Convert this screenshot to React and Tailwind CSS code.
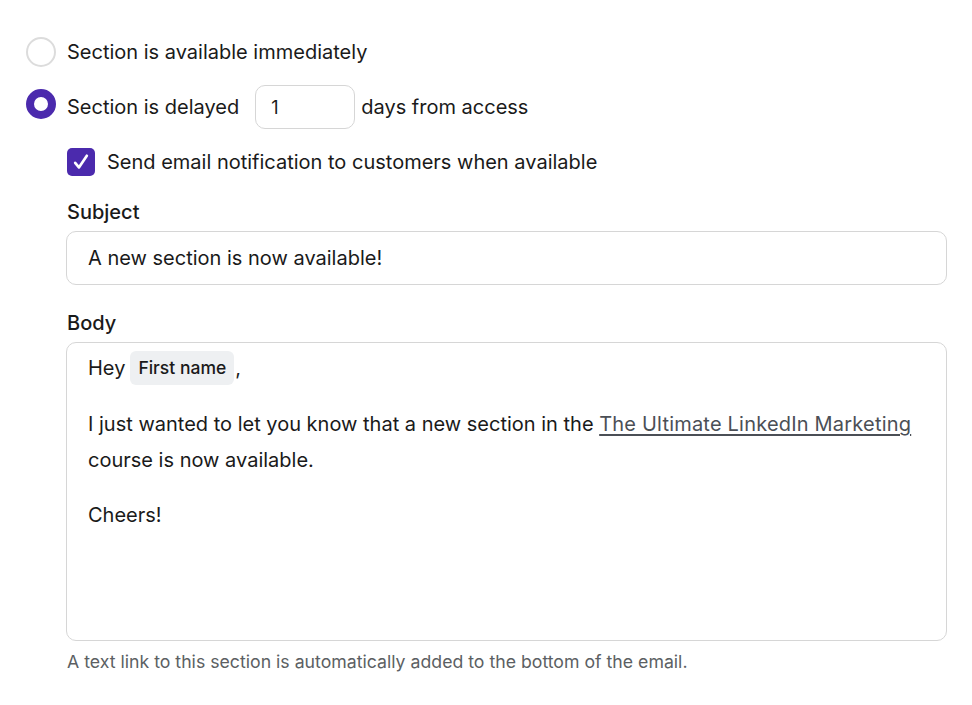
import React from 'react';

function Radio({ checked }) {
  return checked ? (
    <span className="h-[30px] w-[30px] rounded-full border-[8px] border-[#4b2aad] bg-white shrink-0" />
  ) : (
    <span className="h-[30px] w-[30px] rounded-full border-2 border-[#dcdcdc] bg-white shrink-0" />
  );
}

export default function App() {
  return (
    <div className="min-h-screen bg-white text-[#1a1a1a] pl-[26px] pr-[25px] pt-[37px]" style={{ fontFamily: 'Inter, "Noto Sans", sans-serif' }}>
      <div className="flex items-center gap-[11px] h-[30px]">
        <Radio />
        <span className="text-[20px]">Section is available immediately</span>
      </div>

      <div className="flex items-center mt-[18px] h-[44px]">
        <span className="-mt-[6px] flex">
          <Radio checked />
        </span>
        <span className="text-[20px] ml-[11px]">Section is delayed</span>
        <div className="ml-[16px] w-[100px] h-[44px] rounded-[10px] border border-[#d6d6d6] flex items-center px-[15px] text-[18px]">1</div>
        <span className="text-[20px] ml-[6px]">days from access</span>
      </div>

      <div className="pl-[40px]">
        <div className="flex items-center gap-[12px] mt-[19px] h-[28px] pl-[1px]">
          <span className="h-[28px] w-[28px] rounded-[5px] bg-[#4b2aad] flex items-center justify-center">
            <svg width="20" height="20" viewBox="0 0 24 24" fill="none" stroke="white" strokeWidth="3.2" strokeLinecap="round" strokeLinejoin="round">
              <path d="M5 13l4.5 5.5L19 4.5" />
            </svg>
          </span>
          <span className="text-[20px]">Send email notification to customers when available</span>
        </div>

        <div className="mt-[24px] pl-[1px] text-[20px] font-medium leading-[24px]">Subject</div>
        <div className="mt-[7px] h-[54px] rounded-[10px] border border-[#d6d6d6] flex items-center px-[21px] text-[20px]">
          A new section is now available!
        </div>

        <div className="mt-[26px] pl-[1px] text-[20px] font-medium leading-[24px]">Body</div>
        <div className="mt-[7px] h-[299px] rounded-[10px] border border-[#d6d6d6] pl-[21px] pr-[30px] pt-[7px] text-[20px] leading-[36px]">
          <div className="flex items-center">
            <span>Hey</span>
            <span className="ml-[5px] h-[34px] px-[8px] rounded-md bg-[#eef0f2] flex items-center text-[17.5px] font-medium leading-none">First name</span>
            <span className="ml-[1px]">,</span>
          </div>
          <p className="mt-[20px]">
            I just wanted to let you know that a new section in the{' '}
            <span className="underline text-[#4b4f56] decoration-[#4b4f56] underline-offset-[3px] tracking-[0.01em]">The Ultimate LinkedIn Marketing</span>{' '}
            course is now available.
          </p>
          <p className="mt-[19px]">Cheers!</p>
        </div>

        <div className="mt-[10px] pl-[1px] text-[17.7px] text-[#5c5f63] leading-[22px]">
          A text link to this section is automatically added to the bottom of the email.
        </div>
      </div>
    </div>
  );
}
